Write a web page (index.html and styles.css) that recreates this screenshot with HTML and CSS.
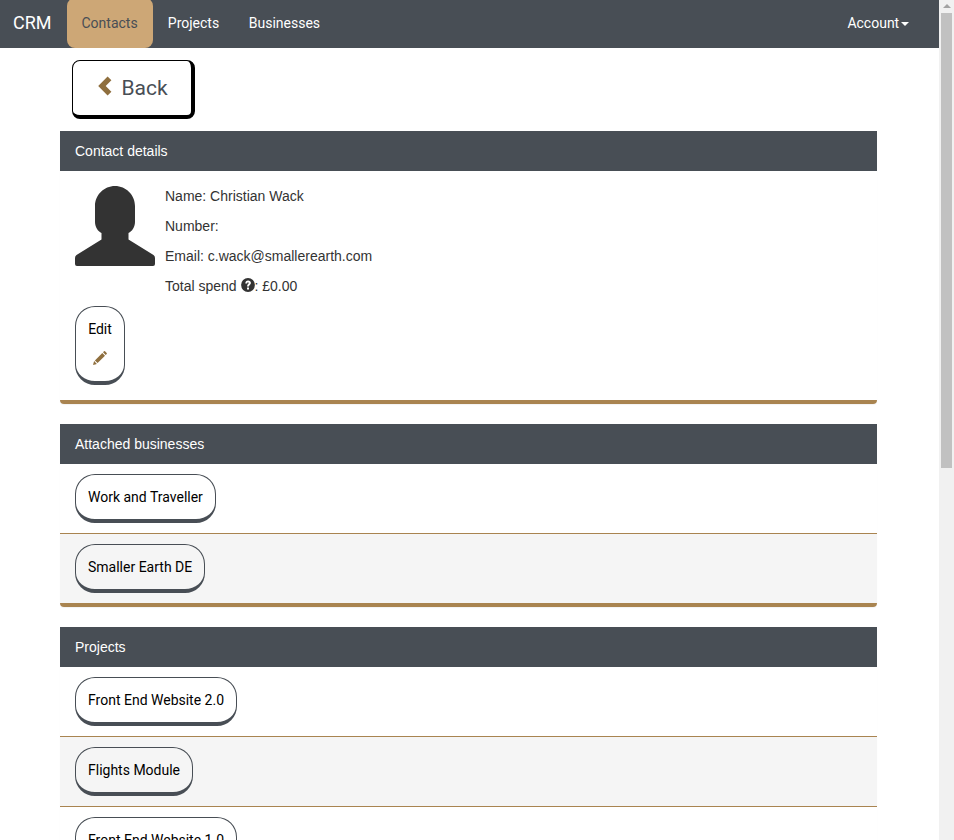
FILE: index.html
```html
<!DOCTYPE html>
<html lang="en">
<head>
<meta charset="utf-8">
<title>CRM</title>
<link rel="stylesheet" href="styles.css">
</head>
<body>
<div class="viewport">
  <div class="page">
    <nav class="navbar">
      <a class="brand">CRM</a>
      <a class="nav-link active">Contacts</a>
      <a class="nav-link">Projects</a>
      <a class="nav-link">Businesses</a>
      <a class="nav-link account">Account<span class="caret"></span></a>
    </nav>
    <main class="container">
      <a class="back">
        <svg class="chevron" viewBox="0 0 14 20"><path d="M9.600 0.600 0.200 10l9.400 9.400 3.800-3.700L7.700 10l5.700-5.700z"/></svg>
        <span>Back</span>
      </a>

      <section class="panel">
        <h2 class="panel-heading">Contact details</h2>
        <div class="panel-body">
          <div class="contact">
            <svg class="avatar" viewBox="0 0 80 80"><path d="M40 0C51 0 60 9 60 20V36C60 41 57 45.500 53.500 47V53.500L78.500 69Q80 70 80 72V78Q80 80 78 80H2Q0 80 0 78V72Q0 70 1.500 69L26.500 53.500V47C23 45.500 20 41 20 36V20C20 9 29 0 40 0Z"/></svg>
            <div class="info">
              <p>Name: Christian Wack</p>
              <p>Number:</p>
              <p>Email: c.wack@smallerearth.com</p>
              <p>Total spend <svg class="help" viewBox="0 0 14 14"><circle cx="7" cy="7" r="6.900"/><path class="mark" d="M4.300 5.400C4.300 3.300 5.500 2.400 7.100 2.400 8.800 2.400 9.900 3.400 9.900 4.900 9.900 6.700 8 6.800 8 8.400H6C6 6.300 7.700 6.100 7.700 5 7.700 4.500 7.400 4.200 7 4.200 6.500 4.200 6.200 4.600 6.200 5.400ZM6 9.400H8V11.500H6Z"/></svg>: £0.00</p>
            </div>
          </div>
          <a class="pill edit">
            <span>Edit</span>
            <svg class="pencil" viewBox="0 0 14 14"><path d="M0 14 1.100 10.100 3.900 12.900ZM1.900 9.400 9.300 2 12 4.700 4.600 12.100ZM10 1.300 11 .3Q11.500-.1 12 .3L13.700 2Q14.100 2.500 13.700 3L12.700 4Z"/></svg>
          </a>
        </div>
      </section>

      <section class="panel">
        <h2 class="panel-heading">Attached businesses</h2>
        <div class="row"><a class="pill">Work and Traveller</a></div>
        <div class="row"><a class="pill">Smaller Earth DE</a></div>
      </section>

      <section class="panel">
        <h2 class="panel-heading">Projects</h2>
        <div class="row"><a class="pill">Front End Website 2.0</a></div>
        <div class="row"><a class="pill">Flights Module</a></div>
        <div class="row"><a class="pill">Front End Website 1.0</a></div>
      </section>
    </main>
  </div>
  <div class="scrollbar"><div class="arrow"></div><div class="thumb"></div></div>
</div>
</body>
</html>
```
FILE: styles.css
```css
* { box-sizing: border-box; }
body {
  margin: 0;
  overflow: hidden;
  background: #fff;
  color: #333;
  font: 14px/20px "Liberation Sans", Arial, sans-serif;
}
.viewport { display: flex; height: 840px; overflow: hidden; }
.page { flex: 1; height: 840px; overflow: hidden; }

.navbar {
  display: flex;
  height: 48px;
  padding-left: 13px;
  background: #484e55;
  color: #fff;
  font-family: Roboto, sans-serif;
}
.brand { width: 54px; font-size: 18px; line-height: 46px; }
.nav-link { padding: 0 14.800px; line-height: 46px; }
.nav-link.active {
  width: 86px;
  margin-top: -2px;
  padding: 2px 14.500px 0;
  border-radius: 8px;
  background: #cda776;
  color: #484e55;
}
.account { display: flex; align-items: center; height: 46px; margin-left: auto; margin-right: 15px; }
.caret {
  margin-left: 2px;
  margin-top: 1px;
  border: 4px solid transparent;
  border-top-color: #fff;
  border-bottom: 0;
}

.container { width: 817px; margin: 12px 0 0 60px; }
.back {
  display: flex;
  align-items: center;
  width: 123px;
  height: 59px;
  margin: 0 0 12px 12px;
  padding: 0 0 1px 25px;
  border: 1px solid #000;
  border-width: 1px 4px 4px 1px;
  border-radius: 8px;
  color: #484e55;
  font: 21px/30px Roboto, sans-serif;
}
.chevron { width: 14px; height: 20px; margin: 0 9.500px 3px 0; fill: #8f6f3e; }

.panel {
  margin-bottom: 20px;
  border-bottom: 4px solid #a98450;
  border-radius: 4px;
  box-shadow: 0 1px 1px rgba(0, 0, 0, .05);
}
.panel-heading {
  height: 40px;
  margin: 0;
  padding: 10px 15px;
  background: #484e55;
  color: #fff;
  font: inherit;
}
.panel-body { padding: 15px; }
.contact { display: flex; gap: 10px; }
.avatar { width: 80px; height: 80px; fill: #333; }
.info p { height: 20px; margin: 0 0 10px; white-space: nowrap; }
.help { width: 14px; height: 14px; vertical-align: -1px; fill: #333; }
.help .mark { fill: #fff; }

.row { height: 70px; padding: 10px 15px; border-bottom: 1px solid #a98450; }
.row:nth-child(odd) { background: #f5f5f5; }
.row:last-child { height: 69px; border-bottom: 0; }
.pill {
  display: inline-block;
  height: 49px;
  padding: 12px;
  border: 1px solid #484e55;
  border-bottom-width: 4px;
  border-radius: 20px;
  color: #000;
  font-family: Roboto, sans-serif;
}
.edit {
  display: flex;
  flex-direction: column;
  align-items: center;
  width: 50px;
  height: 79px;
}
.pencil { width: 14px; height: 14px; margin-top: 12px; fill: #8f6f3e; }

.scrollbar { width: 15px; background: #f1f1f1; }
.arrow {
  width: 8px;
  margin: 4px 0 5px 4px;
  border: 4px solid transparent;
  border-top: 0;
  border-bottom-color: #a3a3a3;
}
.thumb { width: 11px; height: 455px; margin-left: 2px; background: #c1c1c1; }
```
